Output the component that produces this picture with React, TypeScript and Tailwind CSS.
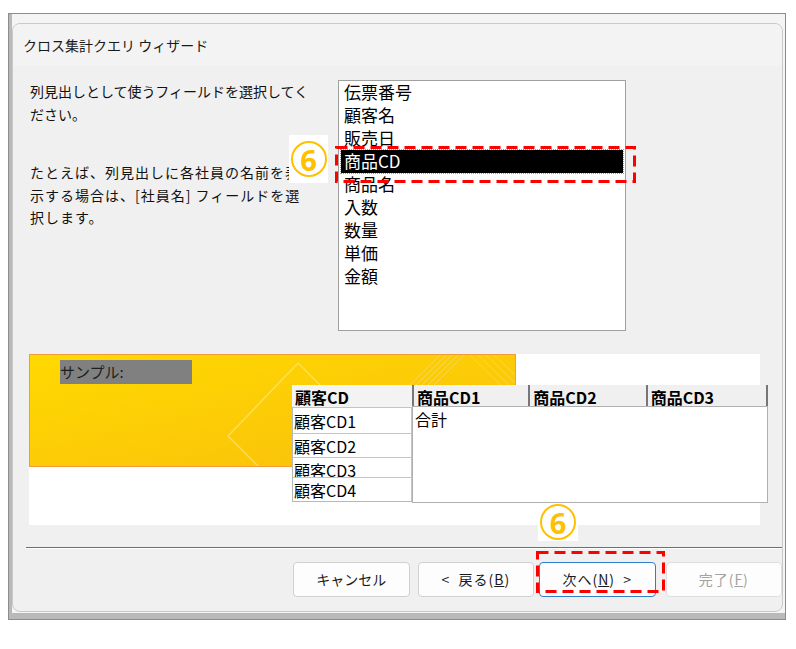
import React from "react";

const jp = { fontFamily: '"Noto Sans CJK JP", "Noto Sans", sans-serif' };

const fields = ["伝票番号", "顧客名", "販売日", "商品CD", "商品名", "入数", "数量", "単価", "金額"];
const selected = "商品CD";

const rows = [
  { label: "顧客CD1", h: "h-[26px]", lh: "leading-[26px]" },
  { label: "顧客CD2", h: "h-[24px]", lh: "leading-[24px]" },
  { label: "顧客CD3", h: "h-[20px]", lh: "leading-[24px]" },
  { label: "顧客CD4", h: "h-[24px]", lh: "leading-[24px]" },
];

const columns = [
  { label: "商品CD1", w: "w-[117px]" },
  { label: "商品CD2", w: "w-[118px]" },
  { label: "商品CD3", w: "w-[121px]" },
];

function BannerArt() {
  return (
    <svg className="absolute inset-0" width="487" height="113" viewBox="0 0 487 113">
      <g stroke="#ffe98a" strokeWidth="1.5" fill="none" opacity="0.6">
        <path d="M198 81 L268 8 L340 80" />
        <path d="M198 81 L230 113" />
      </g>
      <g stroke="#ffe27a" strokeWidth="1" opacity="0.5">
        <path d="M370 40 L410 0" />
        <path d="M376 40 L416 0" />
        <path d="M382 40 L422 0" />
        <path d="M388 40 L428 0" />
        <path d="M394 40 L434 0" />
        <path d="M440 0 L487 46" />
        <path d="M448 0 L487 38" />
        <path d="M456 0 L487 30" />
        <path d="M464 0 L487 22" />
      </g>
    </svg>
  );
}

function Badge({ className }: { className: string }) {
  return (
    <div className={`absolute bg-white flex items-center justify-center ${className}`}>
      <div className="w-[36px] h-[36px] rounded-full border-[2px] border-[#ffc000] flex items-center justify-center">
        <span className="text-[29px] font-bold leading-none text-[#ffc000]" style={{ fontFamily: '"Noto Sans", sans-serif' }}>
          6
        </span>
      </div>
    </div>
  );
}

function DashBox({ className, w, h }: { className: string; w: number; h: number }) {
  return (
    <svg className={`absolute ${className}`} width={w} height={h}>
      <rect x="1.5" y="1.5" width={w - 3} height={h - 3} fill="none" stroke="#ff0000" strokeWidth="3" strokeDasharray="11 6" />
    </svg>
  );
}

function Button({ children, className = "" }: { children: React.ReactNode; className?: string }) {
  return (
    <div
      className={`w-[117px] h-[35px] rounded-[4px] border bg-[#fdfdfd] flex items-center justify-center text-[14px] ${className}`}
    >
      {children}
    </div>
  );
}

export default function App() {
  return (
    <div className="relative w-[796px] h-[649px] bg-white pt-[13px] pl-[8px]" style={jp}>
      {/* window frame */}
      <div className="w-[778px] h-[607px] border border-[#8c8c8c] bg-[#f4f4f4] pt-[9px] pl-[3px] shadow-[inset_3px_-6px_0_#b9b9b9]">
        <div className="w-[771px] h-[589px] rounded-[8px] border border-[#c9c9c9] bg-[#f0f0f0] overflow-hidden flex flex-col">
          <div className="h-[42px] bg-[#f3f3f3] flex items-center pl-[10px] text-[14px] text-[#1a1a1a]">
            クロス集計クエリ ウィザード
          </div>

          {/* instructions + field list */}
          <div className="flex pt-[14px]">
            <div className="w-[308px] ml-[17px] text-[14px] leading-[22.5px] text-[#111] whitespace-nowrap">
              <p>
                列見出しとして使うフィールドを選択してく
                <br />
                ださい。
              </p>
              <p className="mt-[36px] tracking-[1px]">
                たとえば、列見出しに各社員の名前を表
                <br />
                示する場合は、[社員名] フィールドを選
                <br />
                択します。
              </p>
            </div>
            <div className="w-[288px] h-[251px] border border-[#a0a0a0] bg-white px-[2px]">
              {fields.map((f) => (
                <div
                  key={f}
                  className={`h-[23px] pl-[3px] text-[17px] leading-[22px] ${
                    f === selected ? "bg-black text-white outline-1 outline-dotted outline-[#9a9a9a]" : "text-black"
                  }`}
                >
                  {f}
                </div>
              ))}
            </div>
          </div>

          {/* sample preview */}
          <div className="relative mt-[23px] ml-[16px] w-[731px] h-[171px] bg-white">
            <div className="relative w-[487px] h-[113px] border border-[#f39a3a] bg-linear-to-br from-[#ffd900] to-[#f9bf0c] overflow-hidden">
              <BannerArt />
              <div className="relative pl-[30px] pt-[4px]">
                <span className="inline-block w-[132px] h-[24px] bg-[#808080] text-[15px] leading-[24px] text-[#1e1e1e]">
                  サンプル:
                </span>
              </div>
            </div>

            <div className="absolute left-[263px] top-[31px] flex text-[16px] text-black">
              <div className="w-[120px]">
                <div className="h-[22px] bg-[#f3f3f3] pl-[3px] font-bold leading-[24px]">顧客CD</div>
                <div className="border-l border-[#b8b8b8]">
                  {rows.map((r) => (
                    <div key={r.label} className={`${r.h} ${r.lh} overflow-hidden bg-white border-t border-r border-[#c4c4c4] pl-[1px]`}>
                      {r.label}
                    </div>
                  ))}
                  <div className="border-t border-[#b8b8b8]" />
                </div>
              </div>
              <div className="w-[356px]">
                <div className="flex h-[22px] bg-[#f0f0f0] border-b border-[#b0b0b0]">
                  {columns.map((c) => (
                    <div key={c.label} className={`${c.w} border-l-2 border-[#777] pl-[3px] font-bold leading-[24px]`}>
                      {c.label}
                    </div>
                  ))}
                  <div className="w-0 border-l-2 border-[#777]" />
                </div>
                <div className="h-[96px] bg-white border border-t-0 border-[#b0b0b0] pl-[2px] leading-[24px]">合計</div>
              </div>
            </div>
          </div>

          {/* separator */}
          <div className="mt-[22px] ml-[13px] h-[2px] border-t border-[#6f6f6f] border-b border-b-white" />

          {/* buttons */}
          <div className="flex mt-[13px] ml-[280px] text-[#1a1a1a]">
            <Button className="border-[#d0d0d0]">キャンセル</Button>
            <Button className="ml-[8px] border-[#d0d0d0] tracking-[1px]">
              &lt;&nbsp;&nbsp;戻る(<span className="underline">B</span>)
            </Button>
            <Button className="ml-[5px] border-[#2f7fcb] tracking-[1px]">
              次へ(<span className="underline">N</span>)&nbsp;&nbsp;&gt;
            </Button>
            <Button className="ml-[10px] w-[116px] border-[#dedede] text-[#a3a3a3] tracking-[1px]">
              完了(<span className="underline">F</span>)
            </Button>
          </div>
        </div>
      </div>

      {/* annotations */}
      <Badge className="left-[289px] top-[135px] w-[39px] h-[48px]" />
      <DashBox className="left-[335px] top-[146px]" w={301} h={37} />
      <Badge className="left-[538px] top-[503px] w-[40px] h-[38px]" />
      <DashBox className="left-[536px] top-[551px]" w={129} h={42} />
    </div>
  );
}
